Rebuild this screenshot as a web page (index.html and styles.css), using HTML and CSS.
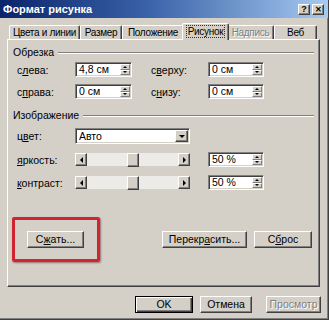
FILE: index.html
```html
<!DOCTYPE html>
<html lang="ru">
<head>
    <meta charset="UTF-8">
    <title>Формат рисунка</title>
    <link rel="stylesheet" href="styles.css">
</head>
<body>
    <div class="window">
        <div class="titlebar">
            <span class="title">Формат рисунка</span>
            <div class="caption-btns">
                <span class="cap-btn">?</span>
                <span class="cap-btn cap-close">&#x2715;</span>
            </div>
        </div>

        <div class="tabs">
            <div class="tab tab-1">Цвета и линии</div>
            <div class="tab tab-2">Размер</div>
            <div class="tab tab-3">Положение</div>
            <div class="tab tab-active"><span class="focus">Рисунок</span></div>
            <div class="tab tab-5 disabled">Надпись</div>
            <div class="tab tab-6">Веб</div>
        </div>

        <div class="panel">
            <div class="group-title"><span>Обрезка</span><i class="rule"></i></div>

            <div class="crop-grid">
                <label>с<u>л</u>ева:</label>
                <div class="field spin-field"><span class="val">4,8 см</span><span class="spin"><b class="up"></b><b class="down"></b></span></div>
                <label class="label-2">с<u>в</u>ерху:</label>
                <div class="field spin-field"><span class="val">0 см</span><span class="spin"><b class="up"></b><b class="down"></b></span></div>

                <label>с<u>п</u>рава:</label>
                <div class="field spin-field"><span class="val">0 см</span><span class="spin"><b class="up"></b><b class="down"></b></span></div>
                <label class="label-2">с<u>н</u>изу:</label>
                <div class="field spin-field"><span class="val">0 см</span><span class="spin"><b class="up"></b><b class="down"></b></span></div>
            </div>

            <div class="group-title group-2"><span>Изображение</span><i class="rule"></i></div>

            <div class="img-grid">
                <label>ц<u>в</u>ет:</label>
                <div class="field combo"><span class="val">Авто</span><span class="drop"><b class="down"></b></span></div>
                <span></span>
                <span></span>

                <label><u>я</u>ркость:</label>
                <div class="scroll"><span class="sbtn"><b class="left"></b></span><span class="track"><span class="thumb"></span></span><span class="sbtn"><b class="right"></b></span></div>
                <span></span>
                <div class="field spin-field"><span class="val">50 %</span><span class="spin"><b class="up"></b><b class="down"></b></span></div>

                <label><u>к</u>онтраст:</label>
                <div class="scroll"><span class="sbtn"><b class="left"></b></span><span class="track"><span class="thumb"></span></span><span class="sbtn"><b class="right"></b></span></div>
                <span></span>
                <div class="field spin-field"><span class="val">50 %</span><span class="spin"><b class="up"></b><b class="down"></b></span></div>
            </div>

            <div class="actions">
                <div class="highlight">
                    <div class="btn btn-compress">С<u>ж</u>ать...</div>
                </div>
                <div class="btn btn-recolor">Перекр<u>а</u>сить...</div>
                <div class="btn btn-reset">С<u>б</u>рос</div>
            </div>
        </div>

        <div class="footer">
            <div class="btn btn-ok">OK</div>
            <div class="btn btn-cancel">Отмена</div>
            <div class="btn btn-preview disabled">Просмотр</div>
        </div>
    </div>
</body>
</html>
```

FILE: styles.css
```css
body{
    margin: 0;
    font-family: "Liberation Sans", Arial, sans-serif;
    font-size: 10.5px;
    color: #000;
    background: #d4d0c8;
}

.window{
    width: 329px;
    height: 320px;
    box-sizing: border-box;
    background: #d4d0c8;
    border-right: 1px solid #404040;
    border-bottom: 1px solid #404040;
    box-shadow: inset -1px -1px #808080;
}

/* title bar */
.titlebar{
    height: 18px;
    display: flex;
    align-items: center;
    justify-content: space-between;
    padding: 0 4px 0 3px;
    background: linear-gradient(to right, #0a246a, #3a62a8 45%, #a6caf0);
    color: white;
    font-size: 11px;
    font-weight: bold;
}
.caption-btns{
    display: flex;
    gap: 2px;
}
.cap-btn{
    width: 12px;
    height: 11px;
    box-sizing: border-box;
    background: #d4d0c8;
    color: #000;
    border: 1px solid;
    border-color: #fff #404040 #404040 #fff;
    box-shadow: inset -1px -1px #808080;
    font-size: 9px;
    line-height: 9px;
    text-align: center;
}
.cap-close{
    font-size: 8px;
}

/* tabs */
.tabs{
    display: flex;
    align-items: flex-end;
    height: 16px;
    margin-top: 5px;
    padding-left: 9px;
    font-size: 10px;
    letter-spacing: -0.3px;
}
.tab{
    height: 14px;
    box-sizing: border-box;
    border-top: 1px solid #fff;
    border-left: 1px solid #fff;
    border-right: 1px solid #404040;
    box-shadow: inset -1px 0 #808080;
    border-radius: 2px 2px 0 0;
    text-align: center;
    line-height: 13px;
    white-space: nowrap;
}
.tab-1{ width: 71px; }
.tab-2{ width: 42px; }
.tab-3{ width: 62px; }
.tab-5{ width: 47px; }
.tab-6{ width: 43px; }
.tab-active{
    width: 47px;
    height: 17px;
    margin: 0 -2px -1px;
    position: relative;
    z-index: 1;
    background: #d4d0c8;
    line-height: 15px;
}
.focus{
    outline: 1px dotted #333;
    padding: 0 1px;
}
.disabled{
    color: #808080;
    text-shadow: 1px 1px #fff;
}

/* page */
.panel{
    width: 313px;
    height: 248px;
    margin-left: 7px;
    box-sizing: border-box;
    border: 1px solid;
    border-color: #fff #404040 #404040 #fff;
    box-shadow: inset -1px -1px #808080;
}

.group-title{
    display: flex;
    align-items: center;
    margin: 6px 5px 0 5px;
    line-height: 13px;
}
.group-2{
    margin-top: 10px;
}
.rule{
    flex: 1;
    height: 0;
    margin-left: 4px;
    border-top: 1px solid #808080;
    border-bottom: 1px solid #fff;
}

label{
    display: flex;
    align-items: center;
}

.crop-grid{
    display: grid;
    grid-template-columns: 58px 57px 76px 56px;
    grid-template-rows: 15px 15px;
    row-gap: 7px;
    margin-top: 3px;
    padding-left: 9px;
}
.label-2{
    padding-left: 19px;
}

.img-grid{
    display: grid;
    grid-template-columns: 58px 115px 18px 56px;
    grid-template-rows: 16px 15px 15px;
    row-gap: 8px;
    margin-top: 6px;
    padding-left: 9px;
}

/* sunken fields */
.field{
    display: flex;
    align-items: stretch;
    box-sizing: border-box;
    background: white;
    border: 1px solid;
    border-color: #808080 #fff #fff #808080;
    box-shadow: inset 1px 1px #404040, inset -1px -1px #d4d0c8;
    padding: 1px;
}
.val{
    flex: 1;
    padding-left: 2px;
    line-height: 11px;
    display: flex;
    align-items: center;
}
.spin{
    width: 10px;
    display: flex;
    flex-direction: column;
}
.spin b, .drop, .sbtn{
    flex: 1;
    display: flex;
    align-items: center;
    justify-content: center;
    background: #d4d0c8;
    box-sizing: border-box;
    border: 1px solid;
    border-color: #fff #808080 #808080 #fff;
}
.drop{
    flex: none;
    width: 13px;
    border-color: #fff #404040 #404040 #fff;
    box-shadow: inset -1px -1px #808080;
}

/* arrows */
.spin .up::after, .spin .down::after, .drop .down::after{
    content: "";
    display: block;
    width: 0;
    height: 0;
    border-left: 2px solid transparent;
    border-right: 2px solid transparent;
}
.spin .up::after{ border-bottom: 2px solid #000; }
.spin .down::after{ border-top: 2px solid #000; }
.drop .down::after{
    border-left-width: 3px;
    border-right-width: 3px;
    border-top: 3px solid #000;
}
.left, .right{
    width: 0;
    height: 0;
    border-top: 3px solid transparent;
    border-bottom: 3px solid transparent;
}
.left{ border-right: 3px solid #000; }
.right{ border-left: 3px solid #000; }

/* slider look (scrollbar) */
.scroll{
    display: flex;
    height: 13px;
    align-self: center;
    background: #edebe7;
}
.sbtn{
    flex: none;
    width: 12px;
    border-color: #fff #404040 #404040 #fff;
    box-shadow: inset -1px -1px #808080;
}
.track{
    flex: 1;
    display: flex;
    justify-content: center;
}
.thumb{
    width: 12px;
    height: 14px;
    box-sizing: border-box;
    background: #d4d0c8;
    border: 1px solid;
    border-color: #fff #404040 #404040 #fff;
    box-shadow: inset -1px -1px #808080;
}

/* buttons */
.btn{
    height: 17px;
    box-sizing: border-box;
    border: 1px solid;
    border-color: #fff #404040 #404040 #fff;
    box-shadow: inset -1px -1px #808080;
    text-align: center;
    line-height: 15px;
    white-space: nowrap;
}

.actions{
    display: flex;
    align-items: center;
    margin-top: 27px;
}
.highlight{
    margin-left: 4px;
    padding: 11px 13px 11px 12px;
    border: 3px solid #cf2530;
    border-radius: 2px;
    box-shadow: 1px 1px 2px rgba(80,0,0,.45);
}
.btn-compress{ width: 57px; }
.btn-recolor{
    width: 85px;
    margin-left: 62px;
}
.btn-reset{
    width: 58px;
    margin-left: 7px;
}

.footer{
    display: flex;
    margin-top: 9px;
    padding-left: 135px;
}
.btn-ok{
    width: 58px;
    border-color: #000;
    box-shadow: inset 1px 1px #fff, inset -1px -1px #404040, inset -2px -2px #808080;
}
.btn-cancel{
    width: 52px;
    margin-left: 7px;
}
.btn-preview{
    width: 55px;
    margin-left: 14px;
}
```
